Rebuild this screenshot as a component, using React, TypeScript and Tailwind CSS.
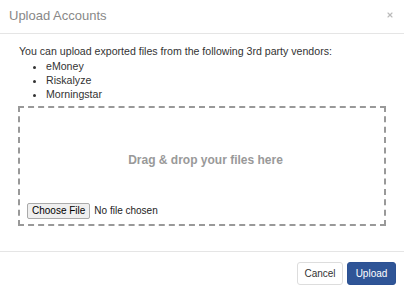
import { X } from "lucide-react";

const VENDORS = ["eMoney", "Riskalyze", "Morningstar"];

export default function App() {
  return (
    <div className="flex h-[294px] w-[404px] flex-col bg-white font-['Liberation_Sans',Arial,sans-serif] text-[#333]">
      <div className="flex h-[34px] items-start justify-between border-b border-[#e5e5e5] pt-[8px] pl-[9px] pr-[10px]">
        <h1 className="text-[13px] leading-[16px] text-[#888]">Upload Accounts</h1>
        <X className="mt-[3px] h-[8px] w-[8px] text-[#bbb]" strokeWidth={3.5} />
      </div>

      <div className="flex-1 px-[18px] pt-[10px] text-[10.6px] leading-[14px]">
        <p className="pl-px">You can upload exported files from the following 3rd party vendors:</p>
        <ul className="mt-px list-disc pl-[28px]">
          {VENDORS.map((v) => (
            <li key={v}>{v}</li>
          ))}
        </ul>
        <div className="mt-[5px] flex h-[120px] flex-col border-2 border-dashed border-[#999] pl-[7px] pb-[5px]">
          <div className="flex flex-1 items-center justify-center pt-[8px] text-[12px] font-bold text-[#999]">
            Drag &amp; drop your files here
          </div>
          <div className="flex items-center gap-[4px]">
            <button className="h-[16px] rounded-[2px] border border-[#aaa] bg-[#efefef] px-[4px] text-[10px] leading-none text-black">
              Choose File
            </button>
            <span className="text-[10px] text-[#222]">No file chosen</span>
          </div>
        </div>
      </div>

      <div className="flex h-[43px] items-start justify-end gap-[4px] border-t border-[#e5e5e5] pt-[10px] pr-[8px]">
        <button className="h-[23px] w-[46px] rounded-[3px] border border-[#ddd] bg-white text-[10px] text-[#333]">
          Cancel
        </button>
        <button className="h-[23px] w-[49px] rounded-[3px] border border-[#2c5193] bg-[#2f5597] text-[10px] text-white">
          Upload
        </button>
      </div>
    </div>
  );
}
